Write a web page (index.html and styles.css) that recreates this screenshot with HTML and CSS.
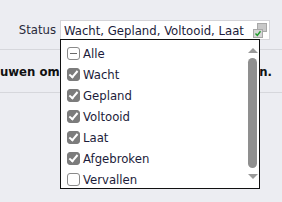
FILE: index.html
```html
<!DOCTYPE html>
<html lang="nl">
<head>
    <meta charset="UTF-8">
    <meta name="viewport" content="width=device-width, initial-scale=1.0">
    <title>Status filter</title>
    <link rel="stylesheet" href="styles.css">
</head>
<body>

    <!-- Filter bar -->
    <div class="filter-row">
        <label class="filter-label" for="status-select">Status</label>
        <div class="multi-select" id="status-select">
            <span class="multi-value">Wacht, Gepland, Voltooid, Laat</span>
            <span class="multi-icon">
                <svg width="14" height="15" viewBox="0 0 14 15">
                    <rect x="4.5" y="0.5" width="9" height="8" fill="#c8c8c8" stroke="#a8a8a8"/>
                    <rect x="0.5" y="6.5" width="9" height="8" fill="#d6d6d6" stroke="#a8a8a8"/>
                    <path d="M2.5 10.5 L4.3 12.4 L7.5 8.3" fill="none" stroke="#1f9a2a" stroke-width="1.4"/>
                </svg>
            </span>

            <!-- Dropdown -->
            <div class="dropdown">
                <ul class="option-list">
                    <li><span class="check partial"></span>Alle</li>
                    <li><span class="check on"></span>Wacht</li>
                    <li><span class="check on"></span>Gepland</li>
                    <li><span class="check on"></span>Voltooid</li>
                    <li><span class="check on"></span>Laat</li>
                    <li><span class="check on"></span>Afgebroken</li>
                    <li><span class="check"></span>Vervallen</li>
                    <li><span class="check"></span>Onbekend</li>
                </ul>
                <div class="scrollbar">
                    <span class="arrow up"></span>
                    <span class="thumb"></span>
                    <span class="arrow down"></span>
                </div>
            </div>
        </div>
    </div>

    <!-- Message -->
    <div class="message-row">
        <p class="message">Klik op Vernieuwen om de lijst met al uw taken te zien.</p>
    </div>

</body>
</html>
```

FILE: styles.css
```css
* {
    box-sizing: border-box;
    margin: 0;
    padding: 0;
}
html {
    overflow: hidden;
}
body {
    font-family: 'DejaVu Sans Condensed', 'DejaVu Sans', Tahoma, sans-serif;
    font-size: 13px;
    background-color: #ecedf2;
    color: #222;
    min-height: 100vh;
}
.filter-row {
    position: relative;
    z-index: 2;
    height: 50px;
    padding: 20px 12px 0 0;
    display: flex;
    justify-content: flex-end;
    align-items: flex-start;
    border-bottom: 1px solid #d6d7dc;
}
.filter-label {
    line-height: 20px;
    margin-right: 4px;
    color: #2a2a3a;
}
.multi-select {
    position: relative;
    width: 210px;
    height: 20px;
    background-color: #fff;
    border: 1px solid #d4d4d8;
    display: flex;
    align-items: center;
    padding: 0 0 0 3px;
}
.multi-value {
    flex-grow: 1;
    white-space: nowrap;
    overflow: hidden;
    color: #1c1c3a;
}
.multi-icon {
    display: flex;
    width: 16px;
    margin-top: 1px;
}
.dropdown {
    position: absolute;
    top: 18px;
    left: -1px;
    width: 200px;
    height: 150px;
    background-color: #fff;
    border: 1px solid #111;
    display: flex;
    z-index: 10;
}
.option-list {
    flex-grow: 1;
    list-style-type: none;
    padding: 3px 0 0 6px;
    overflow: hidden;
}
.option-list li {
    height: 21px;
    display: flex;
    align-items: center;
    white-space: nowrap;
    color: #1c1c3a;
}
.check {
    width: 13px;
    height: 13px;
    margin-right: 3px;
    border: 1px solid #8a8a8a;
    border-radius: 3px;
    background-color: #fff;
    position: relative;
    flex-shrink: 0;
}
.check.on {
    background-color: #7c7c7c;
    border-color: #7c7c7c;
}
.check.on::after {
    content: '';
    position: absolute;
    left: 3px;
    top: 0px;
    width: 3px;
    height: 7px;
    border: solid #fff;
    border-width: 0 2px 2px 0;
    transform: rotate(40deg);
}
.check.partial::after {
    content: '';
    position: absolute;
    left: 2px;
    top: 5px;
    width: 7px;
    height: 1px;
    background-color: #6a6a6a;
}
.scrollbar {
    width: 13px;
    display: flex;
    flex-direction: column;
    align-items: center;
    padding: 8px 0 9px;
}
.thumb {
    flex-grow: 1;
    width: 9px;
    margin: 5px 0 6px;
    border-radius: 5px;
    background-color: #8f8f8f;
}
.arrow {
    width: 0;
    height: 0;
    border-left: 5px solid transparent;
    border-right: 5px solid transparent;
}
.arrow.up {
    border-bottom: 5px solid #9a9a9a;
}
.arrow.down {
    border-top: 5px solid #9a9a9a;
}
.message-row {
    height: 43px;
    display: flex;
    justify-content: flex-end;
    align-items: center;
    padding-right: 10px;
    border-bottom: 1px solid #d6d7dc;
}
.message {
    font-weight: bold;
    white-space: nowrap;
    color: #111;
    flex-shrink: 0;
}
```
